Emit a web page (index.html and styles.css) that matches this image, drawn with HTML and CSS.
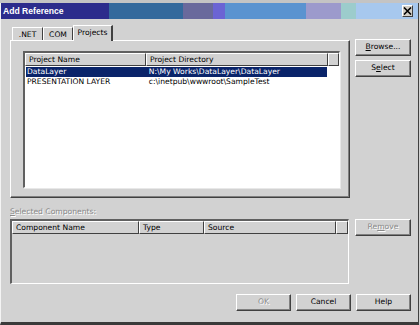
FILE: index.html
```html
<!DOCTYPE html>
<html>
<head>
<meta charset="utf-8">
<link rel="stylesheet" href="styles.css">
</head>
<body>
<div class="strip"></div>
<div class="window">
  <div class="titlebar">
    <span class="title">Add Reference</span>
    <div class="seg s1"></div><div class="seg s2"></div><div class="seg s3"></div><div class="seg s4"></div><div class="seg s5"></div><div class="seg s6"></div><div class="seg s7"></div>
    <div class="close"><svg width="9" height="8" viewBox="0 0 9 8"><path d="M1 0.5 L8 7.5 M8 0.5 L1 7.5" stroke="#000" stroke-width="1.6"/></svg></div>
  </div>
  <div class="content">
    <div class="mainrow">
      <div class="tabarea">
        <div class="tabs">
          <div class="tab t1">.NET</div>
          <div class="tab t2">COM</div>
          <div class="tab t3 active">Projects</div>
        </div>
        <div class="panel">
          <div class="list">
            <div class="header">
              <div class="col c1">Project Name</div>
              <div class="col c2">Project Directory</div>
              <div class="col c3"></div>
            </div>
            <div class="row sel"><span class="cell c1">DataLayer</span><span class="cell c2">N:\My Works\DataLayer\DataLayer</span></div>
            <div class="row"><span class="cell c1">PRESENTATION LAYER</span><span class="cell c2">c:\inetpub\wwwroot\SampleTest</span></div>
          </div>
        </div>
      </div>
      <div class="side">
        <div class="btn"><u>B</u>rowse...</div>
        <div class="btn">S<u>e</u>lect</div>
      </div>
    </div>
    <div class="label disabled"><u>S</u>elected Components:</div>
    <div class="secondrow">
      <div class="list2">
        <div class="header">
          <div class="col d1">Component Name</div>
          <div class="col d2">Type</div>
          <div class="col d3">Source</div>
          <div class="col d4"></div>
        </div>
      </div>
      <div class="side">
        <div class="btn disabled">Re<u>m</u>ove</div>
      </div>
    </div>
    <div class="footer">
      <div class="btn fbtn disabled">OK</div>
      <div class="btn fbtn">Cancel</div>
      <div class="btn fbtn">Help</div>
    </div>
  </div>
</div>
</body>
</html>
```
FILE: styles.css
```css
html, body {
  margin: 0;
  padding: 0;
  background: #d2d2d2;
  width: 420px;
  height: 325px;
  overflow: hidden;
  font-family: "DejaVu Sans", "Liberation Sans", sans-serif;
  font-size: 7.6px;
  color: #000;
}
.strip {
  height: 3px;
  background: #c4c4c4;
}
.window {
  width: 417px;
  height: 319px;
  border-left: 1px solid #f4f4f4;
  border-right: 1px solid #404040;
  border-bottom: 3px solid #3a3a3a;
  background: #d2d2d2;
  display: flex;
  flex-direction: column;
}
.titlebar {
  height: 16px;
  display: flex;
  position: relative;
  background: #a7c8ee;
}
.title {
  position: absolute;
  left: 2px;
  top: 3px;
  color: #fff;
  font-family: "Liberation Sans", Arial, sans-serif;
  font-weight: bold;
  font-size: 8.6px;
}
.seg { height: 16px; }
.s1 { width: 108px; background: #2c2c8c; }
.s2 { width: 74px; background: #33699c; }
.s3 { width: 30px; background: #69699c; }
.s4 { width: 12px; background: #6b64d4; }
.s5 { width: 81px; background: #5a93d0; }
.s6 { width: 35px; background: #9c9acc; }
.s7 { width: 15px; background: #9ccccc; }
.close {
  position: absolute;
  right: 5px;
  top: 2px;
  width: 9px;
  height: 10px;
  background: #d4d0c8;
  border-top: 1px solid #fff;
  border-left: 1px solid #fff;
  border-right: 1px solid #404040;
  border-bottom: 1px solid #404040;
  display: flex;
  align-items: center;
  justify-content: center;
}
.content {
  flex: 1;
  padding: 6px 0 0 9px;
  display: flex;
  flex-direction: column;
}
.mainrow {
  display: flex;
  gap: 5px;
}
.tabarea {
  width: 340px;
  display: flex;
  flex-direction: column;
}
.tabs {
  display: flex;
  height: 15px;
  align-items: flex-end;
  padding-left: 2px;
  position: relative;
  z-index: 1;
}
.tab {
  height: 13px;
  box-sizing: border-box;
  border-top: 1px solid #fff;
  border-left: 1px solid #fff;
  border-right: 1px solid #404040;
  padding: 2px 0 0 0;
  text-align: center;
  background: #d2d2d2;
}
.t1 { width: 31px; }
.t2 { width: 30px; }
.t3 { width: 40px; }
.tab.active {
  height: 16px;
  margin-bottom: -1px;
  padding-top: 2px;
  border-right: 2px solid #404040;
}
.panel {
  height: 158px;
  border-top: 1px solid #fff;
  border-left: 1px solid #fff;
  border-right: 1px solid #404040;
  border-bottom: 1px solid #404040;
  box-shadow: inset -1px -1px 0 #808080;
  padding: 10px 0 0 12px;
  box-sizing: border-box;
}
.list {
  width: 317px;
  height: 137px;
  box-sizing: border-box;
  background: #fff;
  border-top: 2px solid #606060;
  border-left: 2px solid #606060;
  border-right: 1px solid #fff;
  border-bottom: 1px solid #fff;
  box-shadow: 1px 1px 0 #e8e8e8;
}
.header {
  display: flex;
  height: 13px;
}
.col {
  box-sizing: border-box;
  height: 13px;
  background: #d2d2d2;
  border-top: 1px solid #fff;
  border-left: 1px solid #fff;
  border-right: 1px solid #404040;
  border-bottom: 1px solid #404040;
  padding: 1px 0 0 3px;
  white-space: nowrap;
  overflow: hidden;
}
.col.c1 { width: 121px; }
.col.c2 { width: 182px; }
.col.c3 { flex: 1; }
.row {
  display: flex;
  height: 10px;
  line-height: 10px;
  margin-left: 1px;
  width: 301px;
  white-space: nowrap;
}
.header + .row { margin-top: 1px; }
.row.sel {
  background: #0a246a;
  color: #fff;
}
.cell { display: block; overflow: hidden; }
.cell.c1 { width: 120px; padding-left: 1px; }
.cell.c2 { width: 180px; padding-left: 3px; }
.side {
  width: 56px;
  padding-top: 14px;
  display: flex;
  flex-direction: column;
  gap: 4px;
}
.secondrow .side { padding-top: 0; }
.btn {
  box-sizing: border-box;
  width: 56px;
  height: 17px;
  border-top: 1px solid #fff;
  border-left: 1px solid #fff;
  border-right: 1px solid #404040;
  border-bottom: 1px solid #404040;
  box-shadow: inset -1px -1px 0 #808080;
  text-align: center;
  line-height: 14px;
  background: #d2d2d2;
}
.disabled {
  color: #8a8a8a;
  text-shadow: 1px 1px 0 #fff;
}
.label {
  margin-top: 9px;
  height: 12px;
  padding-left: 0;
}
.secondrow {
  display: flex;
  gap: 6px;
}
.list2 {
  width: 339px;
  height: 65px;
  box-sizing: border-box;
  border-top: 2px solid #606060;
  border-left: 2px solid #606060;
  border-right: 1px solid #fff;
  border-bottom: 1px solid #fff;
}
.col.d1 { width: 127px; }
.col.d2 { width: 65px; }
.col.d3 { width: 132px; }
.col.d4 { flex: 1; }
.footer {
  display: flex;
  justify-content: flex-end;
  gap: 5px;
  margin-top: 10px;
  padding-right: 7px;
}
.fbtn { width: 55px; }
```
